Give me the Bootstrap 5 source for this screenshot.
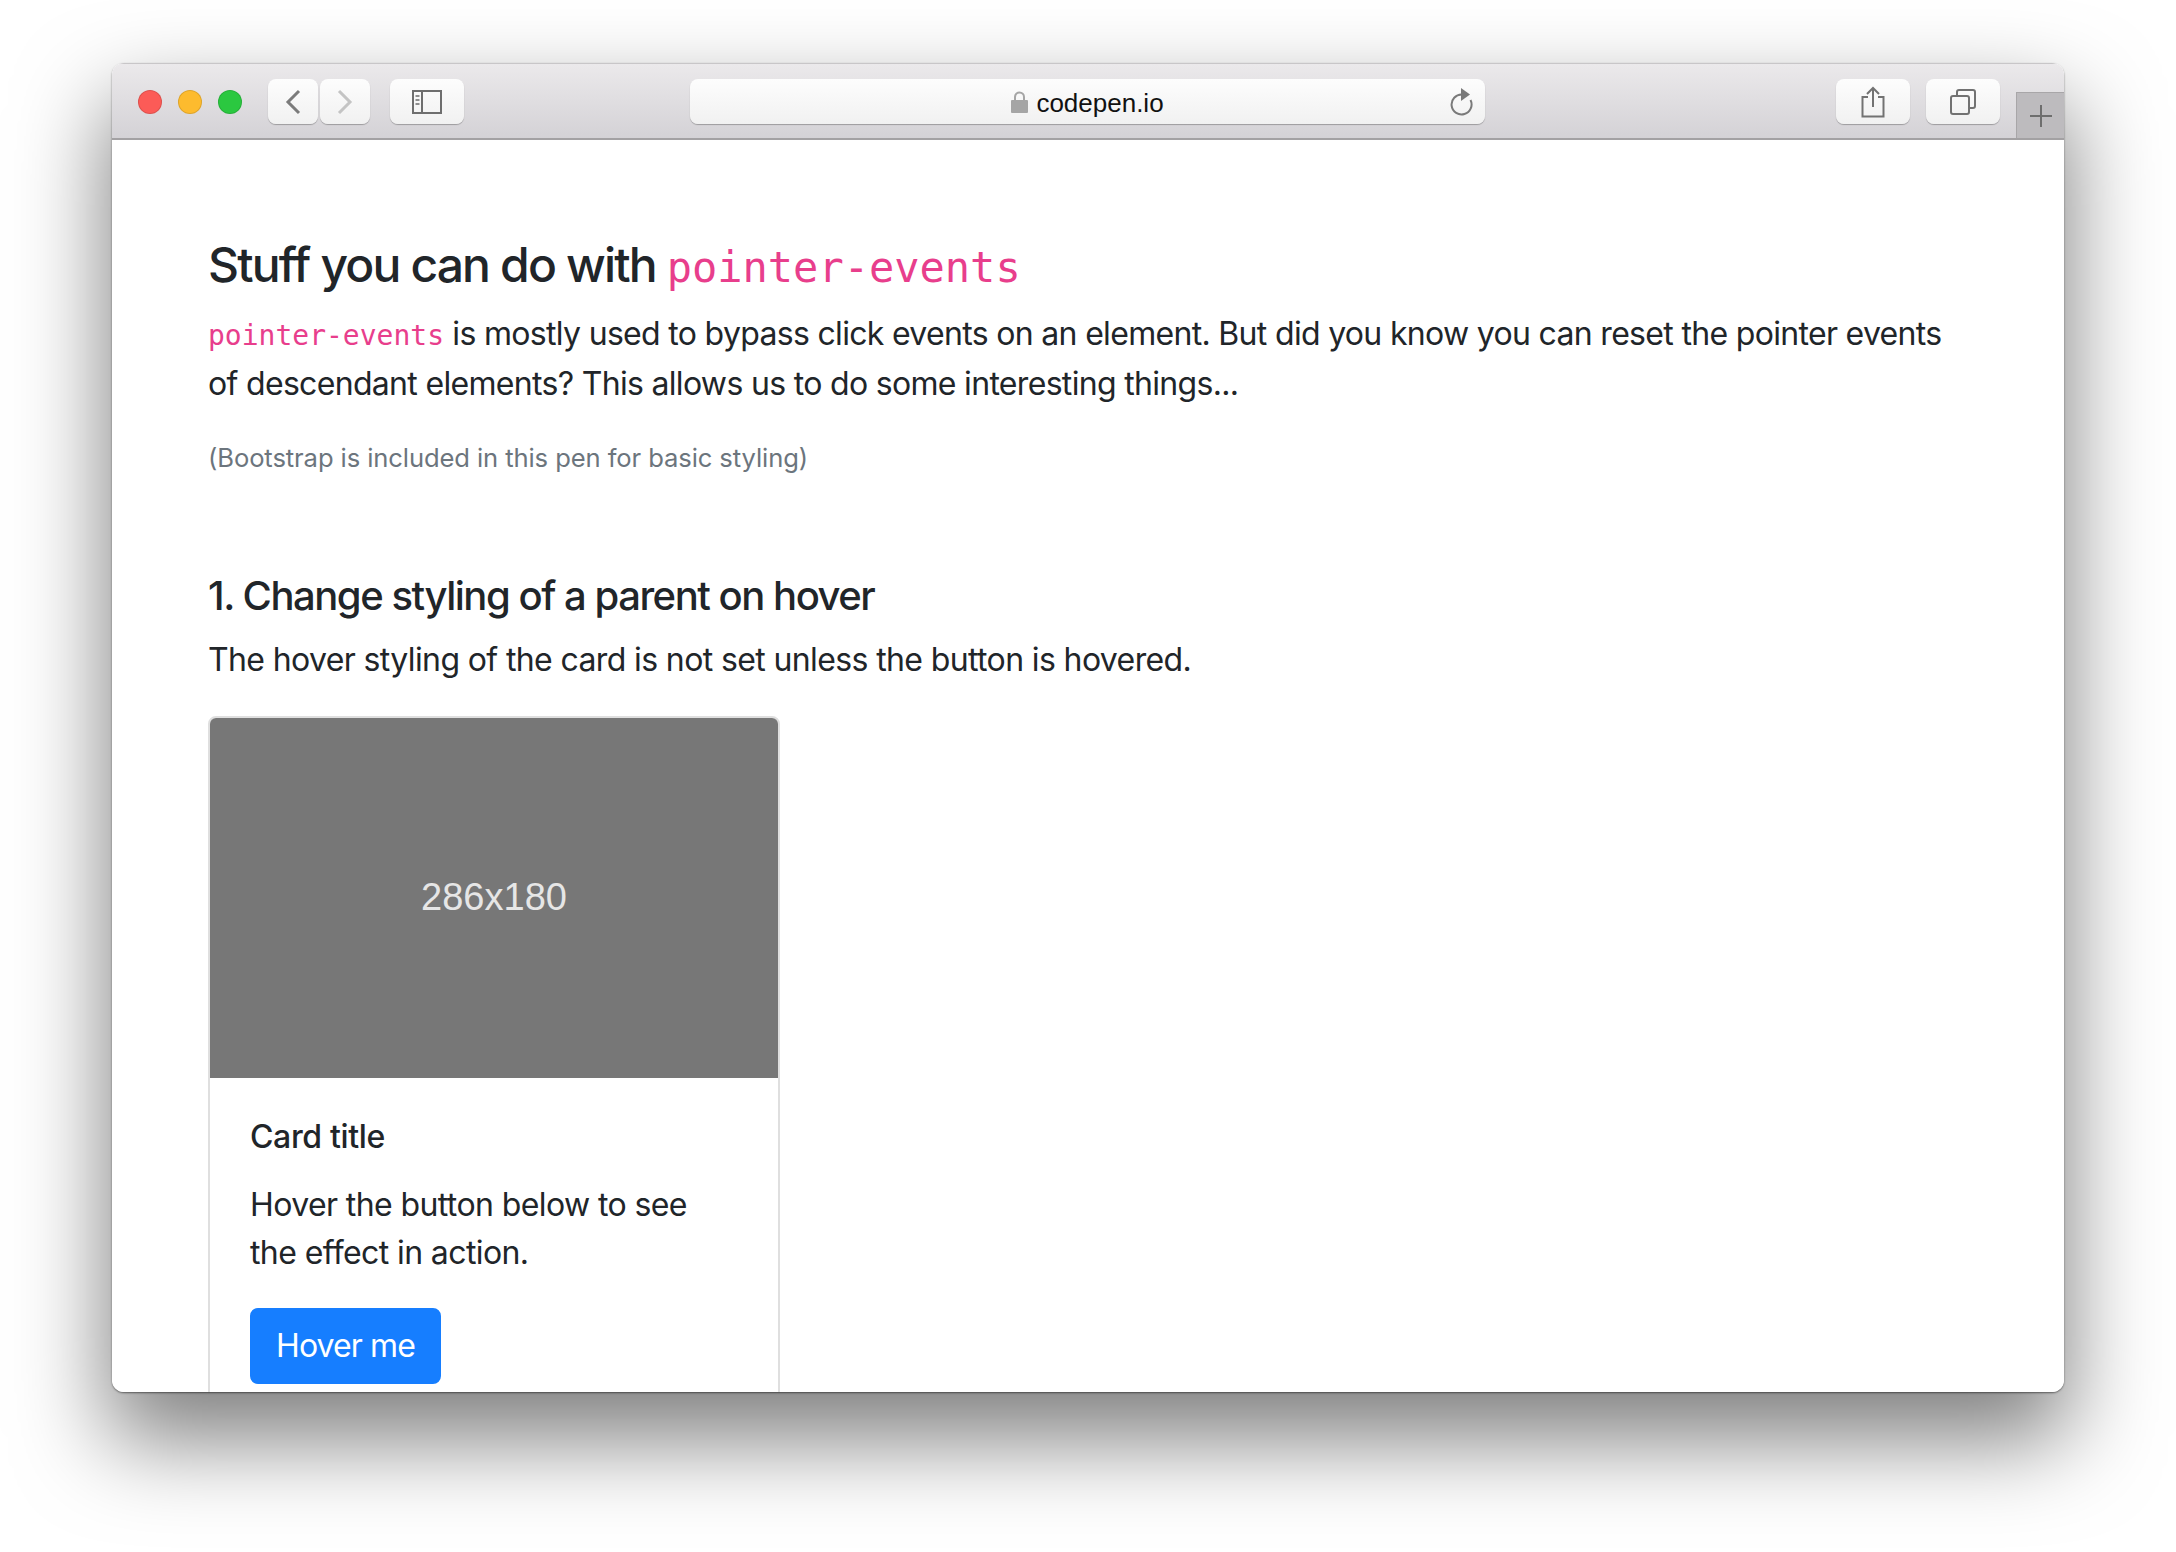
<!DOCTYPE html>
<html lang="en">
<head>
  <meta charset="UTF-8">
  <meta name="viewport" content="width=device-width, initial-scale=1.0">
  <title>codepen.io</title>
  <link rel="stylesheet" href="https://cdn.jsdelivr.net/npm/bootstrap@5.3.0/dist/css/bootstrap.min.css">
  <script src="https://cdn.jsdelivr.net/npm/bootstrap@5.3.0/dist/js/bootstrap.bundle.min.js"></script>
  <style>
    html, body { height: 100%; }
    body { background: #fff; overflow: hidden; font-family: Inter, "Liberation Sans", sans-serif; color: #212529; }
    .browser-window { margin: 63px 112px 0; height: 1329px; border-radius: 12px; overflow: hidden; background: #fff; position: relative; }
    .window-shadow { margin: 63px 112px 0; height: 1329px; border-radius: 12px; box-shadow: 0 1px 2px rgba(0, 0, 0, .5), 0 44px 90px 4px rgba(0, 0, 0, .5); }
    .toolbar { height: 77px; background: linear-gradient(#ebe9eb, #d4d2d6); border-top: 1px solid #c8c6c8; border-bottom: 2px solid #a3a1a3; padding-top: 15px; }
    .light { width: 24px; height: 24px; border-radius: 50%; margin-top: 11px; border: 1px solid rgba(0, 0, 0, .12); }
    .light-red { background: #fc5b57; margin-left: 26px; }
    .light-yellow { background: #fdbb2e; margin-left: 16px; }
    .light-green { background: #2bc840; margin-left: 16px; }
    .tool-btn { height: 45px; background: linear-gradient(#fdfdfd, #f1f1f1); border-radius: 8px; box-shadow: 0 1px 1px rgba(0, 0, 0, .28); }
    .tool-back, .tool-fwd { width: 50px; }
    .tool-back { margin-left: 26px; }
    .tool-fwd { margin-left: 2px; }
    .tool-side { width: 74px; margin-left: 20px; }
    .address-bar { width: 795px; margin-left: 226px; position: relative; font-size: 26px; color: #111; }
    .address-bar svg.reload { position: absolute; right: 12px; top: 9px; }
    .address-text { font-family: "Liberation Sans", sans-serif; position: relative; top: 2px; }
    .tool-share { width: 74px; margin-left: 351px; }
    .tool-tabs { width: 74px; margin-left: 16px; }
    .plus-tab { width: 48px; height: 46px; margin-left: 16px; margin-top: 13px; background: #bdbbbe; border-left: 1px solid #a8a6a8; border-top: 1px solid #a8a6a8; }
    .page-body { padding: 96px 96px 0; }
    .page-title { font-size: 48px; font-weight: 500; letter-spacing: -1.85px; margin-bottom: 16px; line-height: 1.2; }
    .page-title code { font-size: 42px; letter-spacing: 0; font-weight: 400; }
    code { font-family: "DejaVu Sans Mono", monospace; color: #e83e8c; }
    .body-text { font-size: 32px; line-height: 48px; margin-bottom: 32px; letter-spacing: -.68px; }
    .body-text code { font-size: 28px; letter-spacing: 0; }
    .note-text { font-size: 25.6px; line-height: 36px; letter-spacing: -.1px; color: #6c757d; display: block; }
    .section-title { font-size: 40px; font-weight: 500; line-height: 48px; letter-spacing: -1.47px; margin-top: 96px; margin-bottom: 16px; }
    .section-text { letter-spacing: -.62px; }
    .demo-card { width: 572px; border: 2px solid #dfdfdf; border-radius: 8px; }
    .card-pic { height: 360px; background: #777; color: #e6e6e6; font-family: "Liberation Sans", sans-serif; font-size: 38px; border-radius: 6px 6px 0 0; }
    .demo-card .card-body { padding: 40px; }
    .demo-title { font-size: 32px; font-weight: 500; line-height: 38px; letter-spacing: -.35px; margin-bottom: 25px; }
    .demo-text { margin-bottom: 31px; letter-spacing: -.6px; }
    .demo-btn { font-size: 32px; line-height: 48px; padding: 12px 24px; border-width: 2px; border-radius: 8px; letter-spacing: -.9px; background: #167eff; border-color: #167eff; }
  </style>
</head>
<body>
  <div class="window-shadow position-absolute top-0 start-0 end-0"></div>
  <div class="browser-window">
    <!-- Safari toolbar -->
    <div class="toolbar d-flex align-items-start">
      <span class="light light-red"></span>
      <span class="light light-yellow"></span>
      <span class="light light-green"></span>
      <div class="tool-btn tool-back d-flex align-items-center justify-content-center">
        <svg width="16" height="26" viewBox="0 0 16 26"><path d="M14 2 3 13l11 11" fill="none" stroke="#7b7b7b" stroke-width="3"/></svg>
      </div>
      <div class="tool-btn tool-fwd d-flex align-items-center justify-content-center">
        <svg width="16" height="26" viewBox="0 0 16 26"><path d="M2 2l11 11L2 24" fill="none" stroke="#c4c4c4" stroke-width="3"/></svg>
      </div>
      <div class="tool-btn tool-side d-flex align-items-center justify-content-center">
        <svg width="30" height="24" viewBox="0 0 30 24">
          <rect x="1" y="1" width="28" height="22" fill="none" stroke="#6e6e6e" stroke-width="2"/>
          <path d="M10 1v22" stroke="#6e6e6e" stroke-width="2"/>
          <path d="M3.500 6h4M3.500 10h4M3.500 14h4" stroke="#8e8e8e" stroke-width="2"/>
        </svg>
      </div>
      <div class="tool-btn address-bar d-flex align-items-center justify-content-center gap-2">
        <svg width="17" height="22" viewBox="0 0 17 22"><path d="M4 10V6a4.500 4.500 0 0 1 9 0v4" fill="none" stroke="#a5a5a5" stroke-width="2"/><rect y="9" width="17" height="13" rx="1" fill="#a5a5a5"/></svg>
        <span class="address-text">codepen.io</span>
        <svg class="reload" width="24" height="28" viewBox="0 0 24 28"><path d="M13 6.500A10 10 0 1 0 21.500 12" fill="none" stroke="#7a7a7a" stroke-width="2"/><path d="M12 0l9 6.500-9 6.500z" fill="#7a7a7a"/></svg>
      </div>
      <div class="tool-btn tool-share d-flex align-items-center justify-content-center">
        <svg width="24" height="32" viewBox="0 0 24 32"><path d="M7 11H1.500v19.500h21V11H17" fill="none" stroke="#727272" stroke-width="2"/><path d="M12 21V2M6 8l6-6 6 6" fill="none" stroke="#727272" stroke-width="2"/></svg>
      </div>
      <div class="tool-btn tool-tabs d-flex align-items-center justify-content-center">
        <svg width="26" height="26" viewBox="0 0 26 26"><rect x="1" y="7" width="18" height="18" rx="2" fill="none" stroke="#727272" stroke-width="2"/><path d="M7 7V3a2 2 0 0 1 2-2h14a2 2 0 0 1 2 2v14a2 2 0 0 1-2 2h-4" fill="none" stroke="#727272" stroke-width="2"/></svg>
      </div>
      <div class="plus-tab d-flex align-items-center justify-content-center">
        <svg width="24" height="24" viewBox="0 0 24 24"><path d="M12 1v22M1 12h22" stroke="#6e6e6e" stroke-width="2"/></svg>
      </div>
    </div>

    <!-- Page -->
    <div class="page-body">
      <h4 class="page-title">Stuff you can do with <code>pointer-events</code></h4>
      <p class="body-text"><code>pointer-events</code> is mostly used to bypass click events on an element. But did you know you can reset the pointer events of descendant elements? This allows us to do some interesting things...</p>
      <small class="note-text">(Bootstrap is included in this pen for basic styling)</small>
      <h5 class="section-title">1. Change styling of a parent on hover</h5>
      <p class="body-text section-text">The hover styling of the card is not set unless the button is hovered.</p>
      <div class="card demo-card">
        <div class="card-pic d-flex align-items-center justify-content-center">286x180</div>
        <div class="card-body">
          <h5 class="demo-title">Card title</h5>
          <p class="body-text demo-text">Hover the button below to see<br>the effect in action.</p>
          <a href="#" class="btn btn-primary demo-btn">Hover me</a>
        </div>
      </div>
    </div>
  </div>
</body>
</html>
